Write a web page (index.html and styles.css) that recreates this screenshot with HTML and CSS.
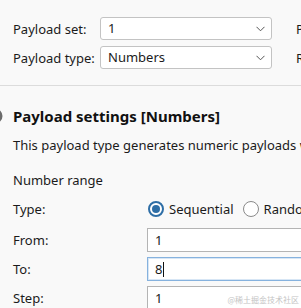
FILE: index.html
```html
<!DOCTYPE html>
<html lang="en">
<head>
    <meta charset="UTF-8">
    <meta name="viewport" content="width=device-width, initial-scale=1.0">
    <title>Payload settings</title>
    <link rel="stylesheet" href="styles.css">
</head>
<body>
    <div class="panel">
        <!-- Payload set / type -->
        <div class="payload-sets">
            <div class="set-row">
                <label class="set-label">Payload set:</label>
                <div class="select"><span>1</span><svg class="chevron" width="9" height="6" viewBox="0 0 9 6"><path d="M0.5 0.8 L4.5 4.8 L8.5 0.8" fill="none" stroke="#555" stroke-width="1"/></svg></div>
                <span class="side-label">Payload count: 8</span>
            </div>
            <div class="set-row">
                <label class="set-label">Payload type:</label>
                <div class="select"><span>Numbers</span><svg class="chevron" width="9" height="6" viewBox="0 0 9 6"><path d="M0.5 0.8 L4.5 4.8 L8.5 0.8" fill="none" stroke="#555" stroke-width="1"/></svg></div>
                <span class="side-label">Request count: 8</span>
            </div>
        </div>

        <!-- Payload settings -->
        <div class="settings">
            <div class="settings-head">
                <svg class="help-icon" width="16" height="16" viewBox="0 0 16 16"><circle cx="8" cy="8" r="7.5" fill="#6b6b6b"/></svg>
                <h2>Payload settings [Numbers]</h2>
            </div>
            <p class="desc">This payload type generates numeric payloads within a given range and in a specified format.</p>

            <div class="group-title">Number range</div>

            <div class="field type-row">
                <span class="field-label">Type:</span>
                <div class="radios">
                    <label class="radio"><span class="dot checked"></span>Sequential</label>
                    <label class="radio"><span class="dot"></span>Random</label>
                </div>
            </div>
            <div class="field first-input">
                <span class="field-label">From:</span>
                <div class="input">1</div>
            </div>
            <div class="field">
                <span class="field-label">To:</span>
                <div class="input focused">8<span class="caret"></span></div>
            </div>
            <div class="field">
                <span class="field-label">Step:</span>
                <div class="input">1</div>
            </div>
        </div>
    </div>

    <div class="watermark">@稀土掘金技术社区</div>
</body>
</html>
```

FILE: styles.css
```css
body {
    margin: 0;
    background: #f9f9f9;
    font-family: "Noto Sans", "Open Sans", sans-serif;
    font-size: 13px;
    color: #1b1b1b;
    overflow: hidden;
    width: 301px;
    height: 308px;
    position: relative;
}

.panel {
    width: 420px;
}

.payload-sets {
    padding: 17px 0 16px 13px;
    border-bottom: 1px solid #dcdcdc;
    display: flex;
    flex-direction: column;
    gap: 6px;
}

.set-row {
    display: flex;
    align-items: center;
}

.set-label {
    width: 87px;
    flex-shrink: 0;
}

.select {
    width: 157px;
    height: 21px;
    border: 1px solid #c3c3c3;
    border-radius: 3px;
    background: #fff;
    display: flex;
    align-items: center;
    justify-content: space-between;
    padding: 0 6px 0 7px;
    box-sizing: content-box;
}

.select span {
    margin-top: -1px;
}

.side-label {
    margin-left: 24px;
    white-space: nowrap;
}

.settings {
    padding: 0 0 0 13px;
}

.settings-head {
    display: flex;
    align-items: center;
    margin-top: 20px;
    margin-left: -13px;
}

.help-icon {
    margin-left: -13px;
    margin-right: 10px;
}

h2 {
    margin: 0;
    font-size: 15px;
    font-weight: bold;
    color: #111;
}

.desc {
    margin: 10px 0 0;
    white-space: nowrap;
}

.group-title {
    margin-top: 17px;
}

.field {
    display: flex;
    align-items: center;
    height: 24px;
    margin-top: 5px;
}

.field.type-row {
    margin-top: 10px;
    height: 20px;
}

.field.first-input {
    margin-top: 9px;
}

.field-label {
    width: 134px;
    flex-shrink: 0;
}

.radios {
    display: flex;
    gap: 8px;
}

.radio {
    display: flex;
    align-items: center;
}

.dot {
    width: 16px;
    height: 16px;
    border: 1px solid #8a8a8a;
    border-radius: 50%;
    background: #fff;
    margin: 0 5px 0 1px;
    box-sizing: border-box;
    position: relative;
}

.dot.checked {
    border: 2px solid #2e6ea6;
}

.dot.checked::after {
    content: "";
    position: absolute;
    left: 2px;
    top: 2px;
    width: 8px;
    height: 8px;
    border-radius: 50%;
    background: #2e6ea6;
}

.input {
    width: 200px;
    height: 22px;
    border: 1px solid #b4b4b4;
    background: #fff;
    display: flex;
    align-items: center;
    padding-left: 7px;
}

.input.focused {
    border-color: #86b2de;
    box-shadow: inset 0 0 0 1px #d7e6f5;
}

.caret {
    display: inline-block;
    width: 1px;
    height: 15px;
    background: #111;
    margin-left: 1px;
}

.watermark {
    position: absolute;
    right: 2px;
    bottom: 3px;
    font-family: "Noto Sans CJK SC", sans-serif;
    font-size: 8px;
    color: #c4c4c4;
}
```
